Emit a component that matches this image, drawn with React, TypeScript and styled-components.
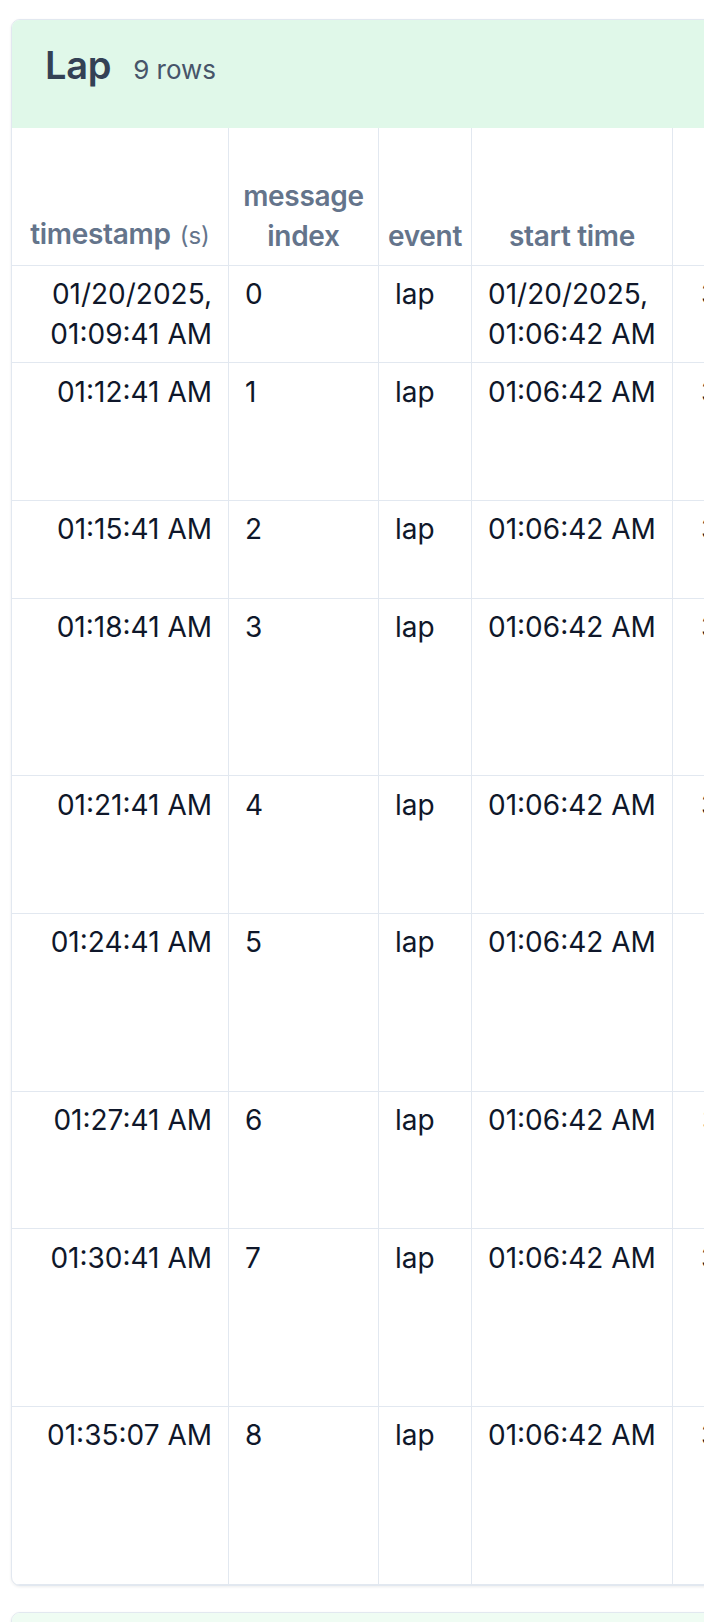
import React from "react";
import styled, { createGlobalStyle } from "styled-components";

const GlobalStyle = createGlobalStyle`
  html, body {
    margin: 0;
    padding: 0;
    background: #ffffff;
    overflow-x: hidden;
  }
  body {
    font-family: Inter, "Noto Sans", "Liberation Sans", sans-serif;
    color: #0f172a;
  }
`;

const Page = styled.div`
  padding: 19px 0 0 11px;
  display: flex;
  flex-direction: column;
  gap: 26px;
  width: 1500px;
`;

// one message type per card
const Card = styled.section`
  border: 1px solid #e2e8f0;
  border-radius: 9px;
  overflow: hidden;
  background: #ffffff;
  box-shadow: 0 1px 3px rgba(15, 23, 42, 0.08);
`;

const CardHeader = styled.header<{ $tint: string }>`
  display: flex;
  align-items: baseline;
  gap: 22px;
  box-sizing: border-box;
  height: 108px;
  padding: 26px 33px 0;
  background: ${(p) => p.$tint};
`;

const Title = styled.h2`
  margin: 0;
  font-size: 38px;
  line-height: 38px;
  font-weight: 600;
  color: #334155;
  letter-spacing: -0.3px;
`;

const RowCount = styled.span`
  font-size: 26px;
  color: #475569;
`;

const COLS = "217px 150px 93px 201px 320px 300px 300px";

const HeadRow = styled.div<{ $lines: number }>`
  display: grid;
  grid-template-columns: ${COLS};
  min-height: ${(p) => p.$lines * 40 + 17.67}px;
`;

const HeadCell = styled.div`
  display: flex;
  flex-direction: column;
  justify-content: flex-end;
  align-items: center;
  box-sizing: border-box;
  padding: 8.33px 6px;
  border-right: 1px solid #e2e8f0;
  border-bottom: 1px solid #e2e8f0;
  text-align: center;
  font-size: 28px;
  line-height: 40px;
  font-weight: 600;
  letter-spacing: -0.3px;
  color: #64748b;
`;

const Label = styled.div`
  max-width: 130px;
`;

const Unit = styled.span`
  font-size: 24px;
  font-weight: 400;
  letter-spacing: 0;
  margin-left: 9px;
`;

const Row = styled.div<{ $lines: number }>`
  display: grid;
  grid-template-columns: ${COLS};
  min-height: ${(p) => p.$lines * 40 + 17.67}px;
`;

const Cell = styled.div<{ $align?: string; $inset?: number }>`
  box-sizing: border-box;
  padding: 8.33px 16px 8.33px ${(p) => p.$inset ?? 16}px;
  border-right: 1px solid #e2e8f0;
  border-bottom: 1px solid #e2e8f0;
  text-align: ${(p) => p.$align ?? "left"};
  font-size: 28px;
  line-height: 40px;
  color: #0f172a;
`;

type Lap = {
  time: string;
  index: number;
  start: string;
  lines: number;
  next: string;
  inset: number;
};

const laps: Lap[] = [
  { time: "01/20/2025, 01:09:41 AM", index: 0, start: "01/20/2025, 01:06:42 AM", lines: 2, next: "3", inset: 28 },
  { time: "01:12:41 AM", index: 1, start: "01:06:42 AM", lines: 3, next: "3", inset: 28 },
  { time: "01:15:41 AM", index: 2, start: "01:06:42 AM", lines: 2, next: "3", inset: 28 },
  { time: "01:18:41 AM", index: 3, start: "01:06:42 AM", lines: 4, next: "3", inset: 28 },
  { time: "01:21:41 AM", index: 4, start: "01:06:42 AM", lines: 3, next: "3", inset: 28 },
  { time: "01:24:41 AM", index: 5, start: "01:06:42 AM", lines: 4, next: "1", inset: 40 },
  { time: "01:27:41 AM", index: 6, start: "01:06:42 AM", lines: 3, next: "3", inset: 29 },
  { time: "01:30:41 AM", index: 7, start: "01:06:42 AM", lines: 4, next: "3", inset: 28 },
  { time: "01:35:07 AM", index: 8, start: "01:06:42 AM", lines: 4, next: "3", inset: 28 },
];

export default function App() {
  return (
    <>
      <GlobalStyle />
      <Page>
        <Card>
          <CardHeader $tint="#e0f8e9">
            <Title>Lap</Title>
            <RowCount>9 rows</RowCount>
          </CardHeader>
          <HeadRow $lines={3}>
            <HeadCell>
              <div>
                timestamp<Unit>(s)</Unit>
              </div>
            </HeadCell>
            <HeadCell>
              <Label>message index</Label>
            </HeadCell>
            <HeadCell>event</HeadCell>
            <HeadCell>start time</HeadCell>
            <HeadCell>
              <Label>total elapsed time</Label>
            </HeadCell>
            <HeadCell>total timer time</HeadCell>
            <HeadCell>total distance</HeadCell>
          </HeadRow>
          {laps.map((lap) => (
            <Row key={lap.index} $lines={lap.lines}>
              <Cell $align="right">{lap.time}</Cell>
              <Cell>{lap.index}</Cell>
              <Cell>lap</Cell>
              <Cell>{lap.start}</Cell>
              <Cell $inset={lap.inset}>{lap.next}</Cell>
              <Cell />
              <Cell />
            </Row>
          ))}
        </Card>
        <Card>
          <CardHeader $tint="#effcf3">
            <Title>Session</Title>
            <RowCount>1 row</RowCount>
          </CardHeader>
        </Card>
      </Page>
    </>
  );
}
